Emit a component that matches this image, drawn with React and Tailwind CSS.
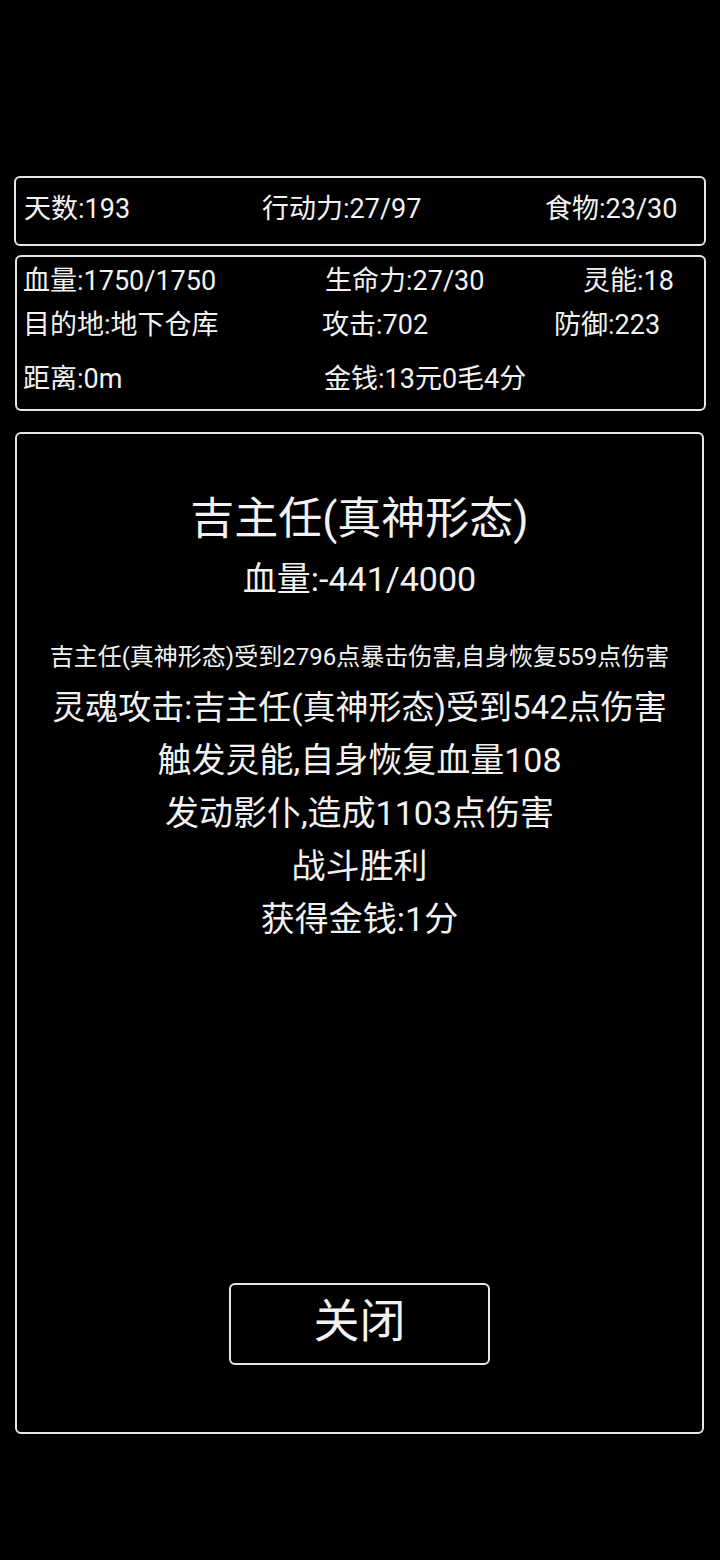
import React from 'react'

const font = { fontFamily: 'Roboto, "Noto Sans CJK SC", sans-serif' }

export default function App() {
  const logs = [
    { t: '灵魂攻击:吉主任(真神形态)受到542点伤害', s: 'text-[33px]' },
    { t: '触发灵能,自身恢复血量108', s: 'text-[34px]' },
    { t: '发动影仆,造成1103点伤害', s: 'text-[34px]' },
    { t: '战斗胜利', s: 'text-[34px]' },
    { t: '获得金钱:1分', s: 'text-[34px]' },
  ]

  return (
    <div className="w-[720px] h-[1560px] bg-black text-[#f2f2f2] pt-[176px]" style={font}>
      {/* 顶部状态 */}
      <div className="ml-[14px] w-[692px] h-[70px] border-2 border-[#e6e6e6] rounded-[6px] flex items-center pl-[8px] pb-[4px] text-[27px]">
        <span className="w-[238px]">天数:193</span>
        <span className="w-[283px]">行动力:27/97</span>
        <span>食物:23/30</span>
      </div>

      {/* 角色属性 */}
      <div className="ml-[15px] mt-[9px] w-[691px] h-[156px] border-2 border-[#e6e6e6] rounded-[6px] pl-[6px] pt-[2px] text-[27px]">
        <div className="flex items-center h-[44px]">
          <span className="w-[302px]">血量:1750/1750</span>
          <span className="w-[258px]">生命力:27/30</span>
          <span>灵能:18</span>
        </div>
        <div className="flex items-center h-[44px]">
          <span className="w-[299px]">目的地:地下仓库</span>
          <span className="w-[232px]">攻击:702</span>
          <span>防御:223</span>
        </div>
        <div className="flex items-center h-[44px] mt-[10px]">
          <span className="w-[301px]">距离:0m</span>
          <span>金钱:13元0毛4分</span>
        </div>
      </div>

      {/* 战斗结果 */}
      <div className="ml-[15px] mt-[21px] w-[689px] h-[1002px] border-2 border-[#e6e6e6] rounded-[6px] flex flex-col items-center pt-[57px]">
        <div className="text-[44px] leading-[56px]">吉主任(真神形态)</div>
        <div className="text-[34px] leading-[44px] mt-[10px]">血量:-441/4000</div>
        <div className="text-[24px] leading-[32px] mt-[40px] whitespace-nowrap">
          吉主任(真神形态)受到2796点暴击伤害,自身恢复559点伤害
        </div>
        <div className="mt-[8px] flex flex-col items-center">
          {logs.map((l, i) => (
            <div key={i} className={`${l.s} leading-[53px] whitespace-nowrap`}>{l.t}</div>
          ))}
        </div>
        <button className="mt-auto mb-[67px] w-[261px] h-[82px] border-2 border-[#e6e6e6] rounded-[6px] text-[46px] leading-none flex items-center justify-center pb-[6px]">
          关闭
        </button>
      </div>
    </div>
  )
}
